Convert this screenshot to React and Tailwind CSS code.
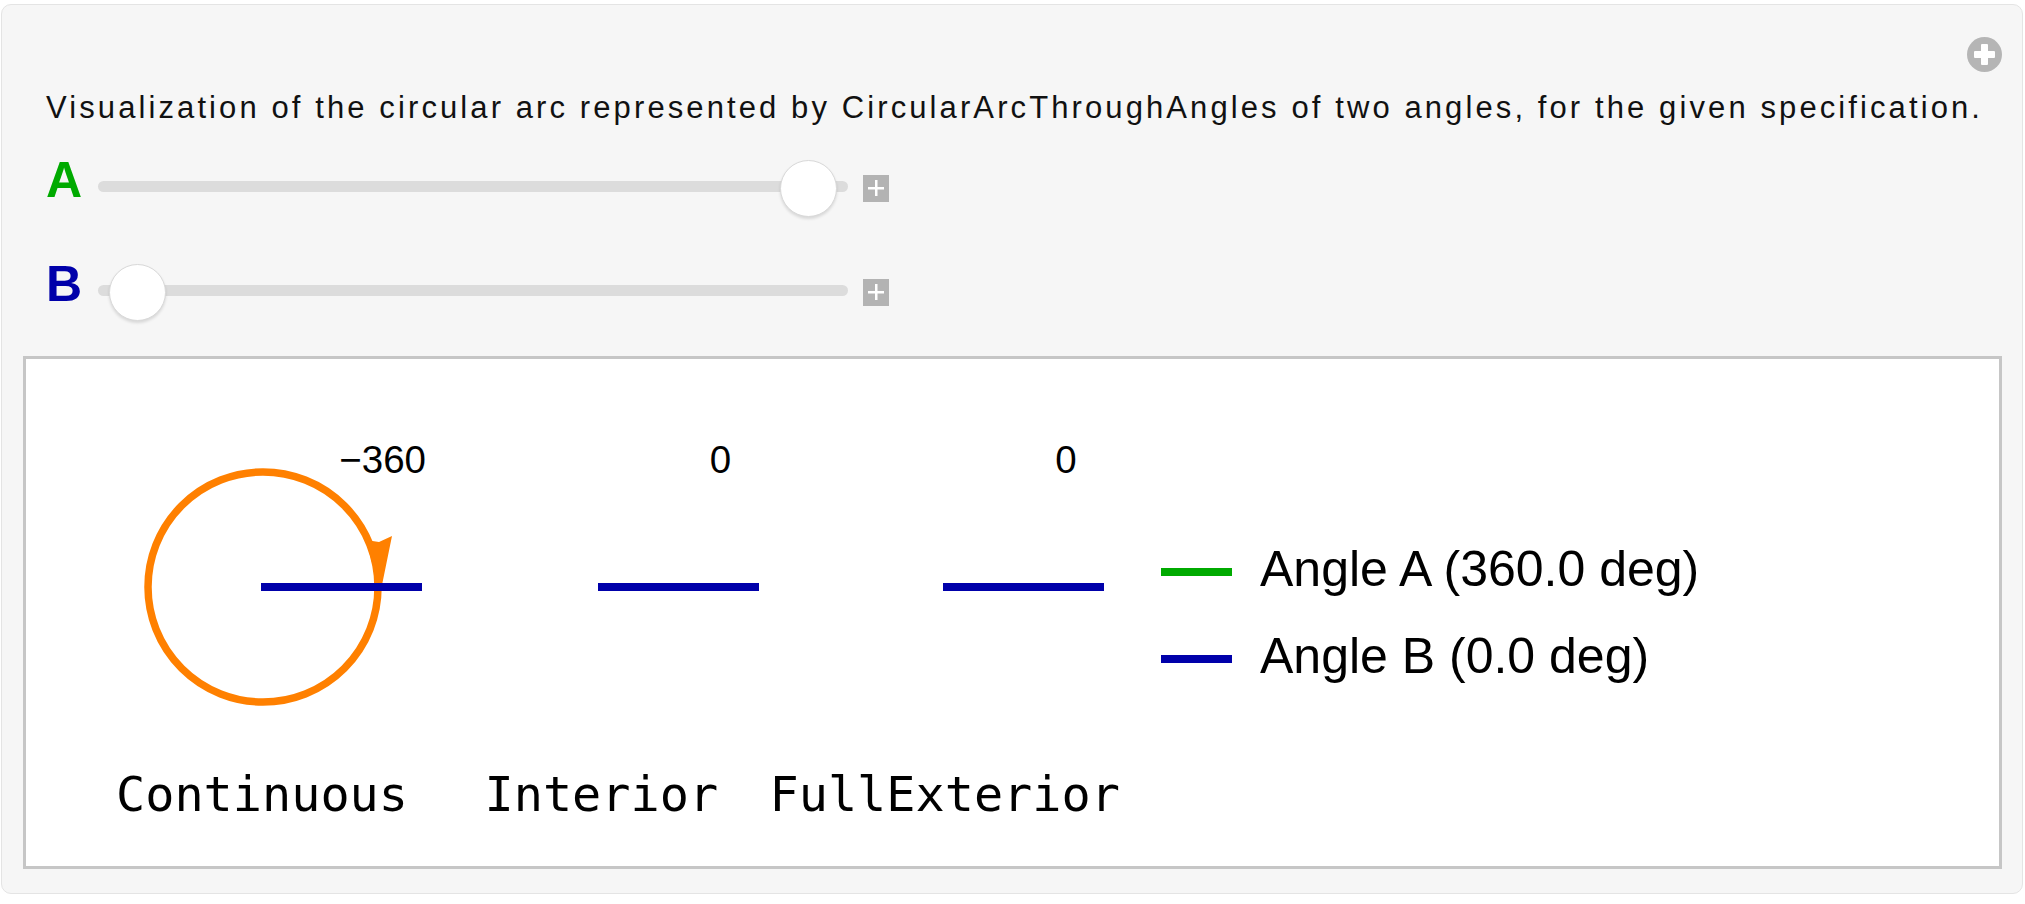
import React from "react";

function PlusSquare() {
  return (
    <div className="ml-[15px] w-[26px] h-[27px] bg-[#b3b3b3] flex items-center justify-center shrink-0">
      <svg width="18" height="18" viewBox="0 0 18 18">
        <rect x="8" y="1" width="2.5" height="16" fill="#fff" />
        <rect x="1" y="8" width="16" height="2.5" fill="#fff" />
      </svg>
    </div>
  );
}

function SliderRow({ label, labelClass, thumbClass }) {
  return (
    <div className="flex items-center h-[60px]">
      <div
        className={
          "w-[36px] text-[50px] leading-[50px] font-bold -translate-y-2 shrink-0 font-['Liberation_Sans',Arial,sans-serif] " +
          labelClass
        }
      >
        {label}
      </div>
      <div className="relative ml-[16px] w-[750px] h-[60px] shrink-0">
        <div className="absolute left-0 right-0 top-[22.5px] h-[11px] rounded-full bg-[#dcdcdc]" />
        <div
          className={
            "absolute top-[1.5px] w-[57px] h-[57px] rounded-full bg-white border border-[#d9d9d9] shadow-[0_2px_3px_rgba(0,0,0,0.12)] " +
            thumbClass
          }
        />
      </div>
      <PlusSquare />
    </div>
  );
}

function LegendRow({ lineClass, text }) {
  return (
    <div className="flex items-center h-[56px]">
      <div className={"w-[71px] h-[8px] translate-y-[3px] " + lineClass} />
      <div className="ml-[28px] text-[50px] leading-[56px] text-black whitespace-nowrap font-['Liberation_Sans',Arial,sans-serif]">
        {text}
      </div>
    </div>
  );
}

function Plot() {
  const blue = "#0000aa";
  return (
    <svg width="1110" height="507" viewBox="0 0 1110 507" className="self-start shrink-0">
      <circle cx="237" cy="228" r="115" fill="none" stroke="#ff8000" strokeWidth="7.5" />
      <path d="M340 181 L353 183 L366 177 L356 226 L352 226 Z" fill="#ff8000" />
      <line x1="235" y1="228" x2="396" y2="228" stroke={blue} strokeWidth="8" />
      <line x1="572" y1="228" x2="733" y2="228" stroke={blue} strokeWidth="8" />
      <line x1="917" y1="228" x2="1078" y2="228" stroke={blue} strokeWidth="8" />
      <g className="font-['Liberation_Sans',Arial,sans-serif]" fontSize="38.5" fill="#000">
        <text x="400" y="114" textAnchor="end">
          −360
        </text>
        <text x="694.5" y="114" textAnchor="middle">
          0
        </text>
        <text x="1040" y="114" textAnchor="middle">
          0
        </text>
      </g>
      <g className="font-['DejaVu_Sans_Mono',monospace]" fontSize="48.5" fill="#000">
        <text x="90" y="452">Continuous</text>
        <text x="458.5" y="452">Interior</text>
        <text x="743.5" y="452">FullExterior</text>
      </g>
    </svg>
  );
}

export default function App() {
  return (
    <div className="w-[2025px] h-[904px] bg-white pt-[4px] pl-[1px] overflow-hidden">
      <div className="relative w-[2022px] h-[890px] rounded-[10px] border border-[#e4e4e4] bg-[#f6f6f6]">
        <div className="absolute right-[20px] top-[32px] w-[35px] h-[35px]">
          <svg width="35" height="35" viewBox="0 0 35 35">
            <circle cx="17.5" cy="17.5" r="17.5" fill="#b5b5b5" />
            <rect x="14" y="7" width="7" height="21" rx="1" fill="#fff" />
            <rect x="7" y="14" width="21" height="7" rx="1" fill="#fff" />
          </svg>
        </div>
        <div className="pt-[86px] pl-[44px] text-[31px] leading-[34px] tracking-[3.1px] text-[#111] whitespace-nowrap font-['Liberation_Sans',Arial,sans-serif]">
          Visualization of the circular arc represented by CircularArcThroughAngles of two angles, for the given specification.
        </div>
        <div className="mt-[33px] pl-[44px] flex flex-col gap-[44px]">
          <SliderRow label="A" labelClass="text-[#00aa00]" thumbClass="left-[681.5px]" />
          <SliderRow label="B" labelClass="text-[#0000aa]" thumbClass="left-[10.5px]" />
        </div>
        <div className="ml-[21px] mt-[34px] w-[1979px] h-[513px] border-[3px] border-[#c6c6c6] bg-white flex items-center">
          <Plot />
          <div className="ml-[25px] flex flex-col gap-[31px]">
            <LegendRow lineClass="bg-[#00aa00]" text="Angle A (360.0 deg)" />
            <LegendRow lineClass="bg-[#0000aa]" text="Angle B (0.0 deg)" />
          </div>
        </div>
      </div>
    </div>
  );
}
